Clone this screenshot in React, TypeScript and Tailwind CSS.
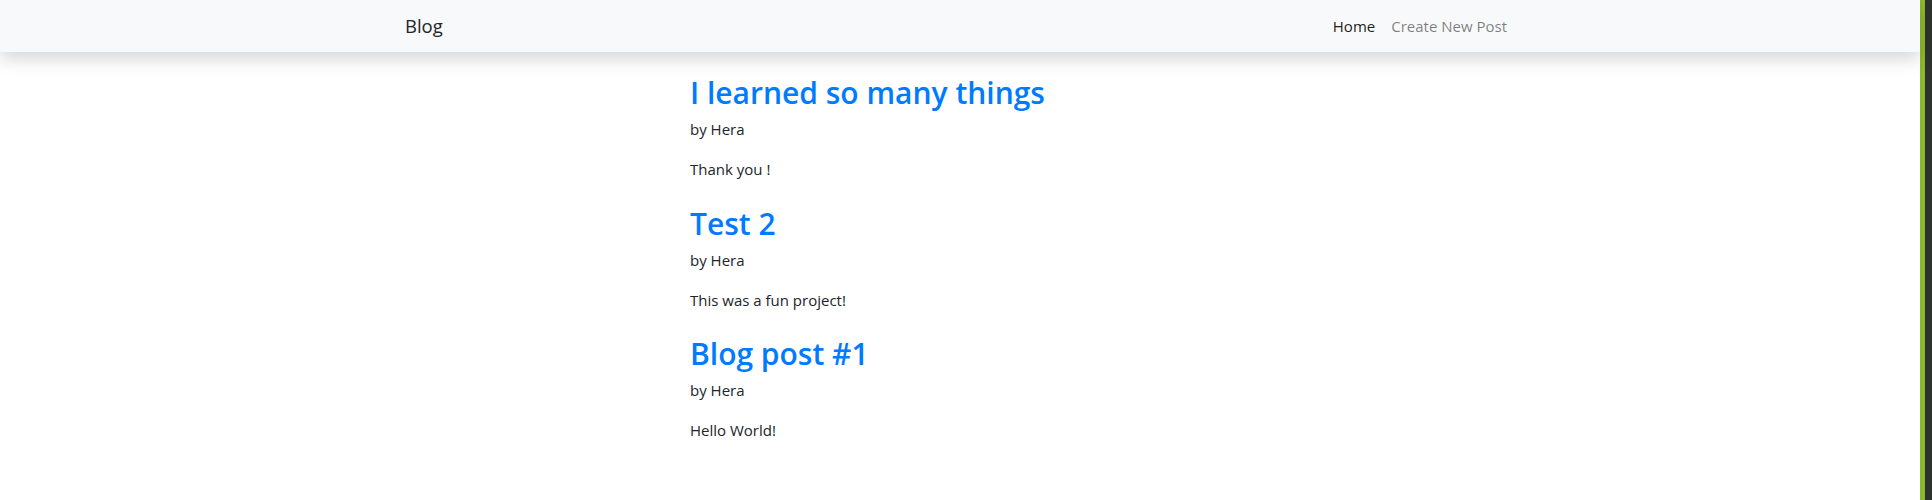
const posts = [
  { title: 'I learned so many things', author: 'Hera', body: 'Thank you !' },
  { title: 'Test 2', author: 'Hera', body: 'This was a fun project!' },
  { title: 'Blog post #1', author: 'Hera', body: 'Hello World!' },
];

function Navbar() {
  return (
    <nav className="relative z-10 h-[52px] bg-[#f8f9fa] shadow-[0_8px_16px_rgba(0,0,0,0.15)]">
      <div className="mx-auto flex h-full w-[1110px] items-center justify-between">
        <a className="text-[18.5px] leading-[30px] text-[#212529]">Blog</a>
        <ul className="flex items-center">
          <li>
            <a className="block px-2 text-[15px] leading-6 text-black/90">Home</a>
          </li>
          <li>
            <a className="block px-2 text-[15px] leading-6 text-black/50">Create New Post</a>
          </li>
        </ul>
      </div>
    </nav>
  );
}

export default function App() {
  return (
    <div className="flex h-[500px] font-['Open_Sans',sans-serif]">
      <main className="flex-1 bg-white">
        <Navbar />
        <div className="mx-auto w-[540px] pt-[22px]">
          {posts.map((post) => (
            <article key={post.title}>
              <h2 className="mb-[5px] text-[30px] font-semibold leading-[38px] text-[#007bff]">{post.title}</h2>
              <p className="mb-4 text-[15px] leading-6 text-[#212529]">by {post.author}</p>
              <p className="mb-[23.5px] text-[15px] leading-6 text-[#212529]">{post.body}</p>
            </article>
          ))}
        </div>
      </main>
      <div className="w-[5px] bg-[#8cb82b]" />
      <div className="w-[7px] bg-[#2d3130]" />
    </div>
  );
}
